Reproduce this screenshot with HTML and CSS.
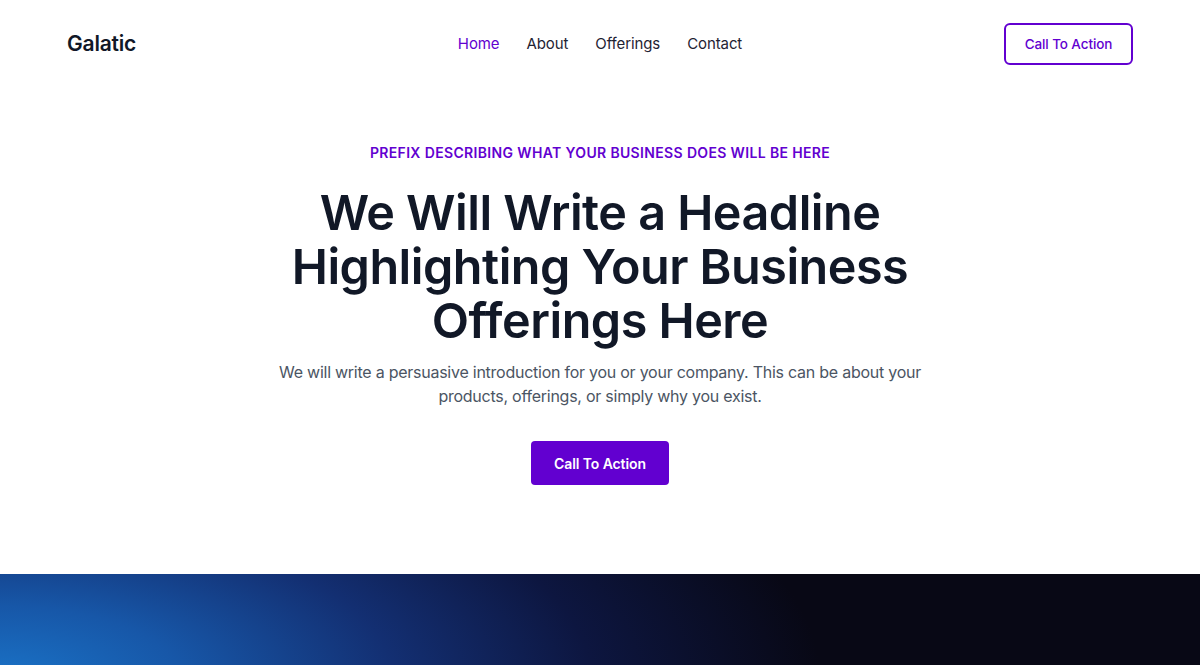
FILE: index.html
```html
<!DOCTYPE html>
<html lang="en">
<head>
<meta charset="utf-8">
<title>Galatic</title>
<link rel="stylesheet" href="styles.css">
</head>
<body>
<header class="site-header">
  <div class="logo">Galatic</div>
  <nav class="nav">
    <a class="nav-link active" href="#">Home</a>
    <a class="nav-link" href="#">About</a>
    <a class="nav-link" href="#">Offerings</a>
    <a class="nav-link" href="#">Contact</a>
  </nav>
  <div class="header-actions">
    <a class="btn-outline" href="#">Call To Action</a>
  </div>
</header>
<main>
  <section class="hero">
    <p class="prefix">PREFIX DESCRIBING WHAT YOUR BUSINESS DOES WILL BE HERE</p>
    <h1 class="headline">We Will Write a Headline Highlighting Your Business Offerings Here</h1>
    <p class="intro">We will write a persuasive introduction for you or your company. This can be about your products, offerings, or simply why you exist.</p>
    <a class="btn-solid" href="#">Call To Action</a>
  </section>
  <section class="dark-band"></section>
</main>
</body>
</html>
```

FILE: styles.css
```css
* { box-sizing: border-box; }
html, body { margin: 0; padding: 0; }
body {
  font-family: "Inter", "Liberation Sans", sans-serif;
  background: #ffffff;
  color: #0f172a;
  overflow: hidden;
}
a { text-decoration: none; }

.site-header {
  display: grid;
  grid-template-columns: 1fr auto 1fr;
  align-items: center;
  height: 87px;
  padding: 0 67px;
}
.logo {
  font-size: 21px;
  font-weight: 600;
  color: #111827;
  letter-spacing: -0.2px;
}
.nav {
  display: flex;
  gap: 27px;
}
.nav-link {
  font-size: 15px;
  color: #1f2333;
  letter-spacing: -0.1px;
}
.nav-link.active { color: #6200d0; }
.header-actions {
  display: flex;
  justify-content: flex-end;
}
.btn-outline {
  display: flex;
  align-items: center;
  justify-content: center;
  width: 129px;
  height: 42px;
  border: 2px solid #6200d0;
  border-radius: 6px;
  color: #6200d0;
  font-size: 13.5px;
  font-weight: 500;
  letter-spacing: -0.1px;
}

.hero {
  display: flex;
  flex-direction: column;
  align-items: center;
  text-align: center;
  padding-top: 57px;
  height: 487px;
}
.prefix {
  margin: 0;
  font-size: 14px;
  font-weight: 600;
  color: #6200d0;
  line-height: 18px;
  letter-spacing: 0.35px;
}
.headline {
  margin: 24px 0 0;
  width: 660px;
  font-size: 48.5px;
  font-weight: 600;
  line-height: 54px;
  letter-spacing: -0.5px;
  color: #111827;
}
.intro {
  margin: 12px 0 0;
  width: 660px;
  font-size: 16px;
  line-height: 24px;
  letter-spacing: -0.25px;
  color: #4b5563;
}
.btn-solid {
  margin-top: 33px;
  display: flex;
  align-items: center;
  justify-content: center;
  width: 138px;
  height: 44px;
  border-radius: 4px;
  background: #6200d0;
  color: #ffffff;
  font-size: 14px;
  font-weight: 600;
  letter-spacing: -0.1px;
}

.dark-band {
  height: 91px;
  background:
    radial-gradient(ellipse 820px 330px at 0% 115%, #1a72c6 0%, #1757a8 22%, #132f72 48%, #0d1640 72%, rgba(8,8,21,0) 100%),
    #080815;
}
```
